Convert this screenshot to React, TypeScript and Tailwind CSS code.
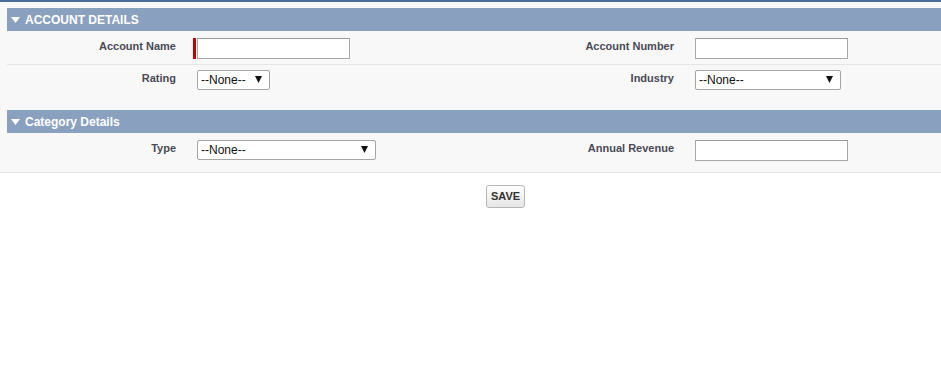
import React from "react";

const font = { fontFamily: '"Liberation Sans", Arial, sans-serif' };

function Arrow() {
  return (
    <svg width="9" height="6" viewBox="0 0 9 6" className="mr-[5px]">
      <path d="M0 0 H9 L4.5 6 Z" fill="#ffffff" />
    </svg>
  );
}

function SectionHeader({ title }: { title: string }) {
  return (
    <div className="ml-[7px] h-[23px] bg-[#8aa0bf] flex items-center pl-[4px] text-white text-[12px] font-bold">
      <Arrow />
      <span>{title}</span>
    </div>
  );
}

function TextInput({ required = false }: { required?: boolean }) {
  return (
    <div className="relative w-[153px]">
      {required && <div className="absolute left-[-4px] top-0 w-[3px] h-[21px] bg-[#c00000]" />}
      <input
        type="text"
        className="block w-[153px] h-[21px] bg-white border border-[#a8a8a8] border-t-[#9a9a9a] outline-none"
      />
    </div>
  );
}

function Select({ width }: { width: string }) {
  return (
    <div className={`relative h-[20px] ${width}`}>
      <select className="appearance-none block w-full h-[20px] bg-white border border-[#a5a5a5] rounded-[2px] pl-[3px] text-[12px] text-[#111] outline-none">
        <option>--None--</option>
      </select>
      <svg width="7" height="7" viewBox="0 0 7 7" className="absolute right-[8px] top-[6px] pointer-events-none">
        <path d="M0 0 H7 L3.5 7 Z" fill="#111" />
      </svg>
    </div>
  );
}

function Row({
  leftLabel,
  left,
  rightLabel,
  right,
  className,
}: {
  leftLabel: string;
  left: React.ReactNode;
  rightLabel: string;
  right: React.ReactNode;
  className: string;
}) {
  const label = "pr-[12px] pt-[1px] text-right text-[11px] leading-[14px] font-bold text-[#4a4a56]";
  return (
    <div className={`ml-[7px] flex ${className}`}>
      <div className={`w-[181px] ${label}`}>{leftLabel}</div>
      <div className="w-[282px] pl-[9px]">{left}</div>
      <div className={`w-[216px] ${label}`}>{rightLabel}</div>
      <div className="flex-1 pl-[9px]">{right}</div>
    </div>
  );
}

export default function App() {
  return (
    <div className="w-[941px] h-[384px] bg-white" style={font}>
      <div className="bg-[#f8f8f8] border-t-2 border-t-[#4a6d9c] border-b border-b-[#e3e3e3] pt-[6px] pb-[6px]">
        <SectionHeader title="ACCOUNT DETAILS" />
        <Row
          className="h-[34px] pt-[7px] border-b border-[#e6e6e6]"
          leftLabel="Account Name"
          left={<TextInput required />}
          rightLabel="Account Number"
          right={<TextInput />}
        />
        <Row
          className="h-[33px] pt-[5px]"
          leftLabel="Rating"
          left={<Select width="w-[73px]" />}
          rightLabel="Industry"
          right={<Select width="w-[146px]" />}
        />
        <div className="h-[12px]" />
        <SectionHeader title="Category Details" />
        <Row
          className="h-[33px] pt-[7px]"
          leftLabel="Type"
          left={<Select width="w-[179px]" />}
          rightLabel="Annual Revenue"
          right={<TextInput />}
        />
      </div>
      <div className="flex justify-center pl-[70px] pt-[12px]">
        <button className="h-[23px] px-[4px] border border-[#b5b5b5] rounded-[3px] bg-gradient-to-b from-white to-[#e6e6e6] text-[11px] font-bold text-[#333]">
          SAVE
        </button>
      </div>
    </div>
  );
}
